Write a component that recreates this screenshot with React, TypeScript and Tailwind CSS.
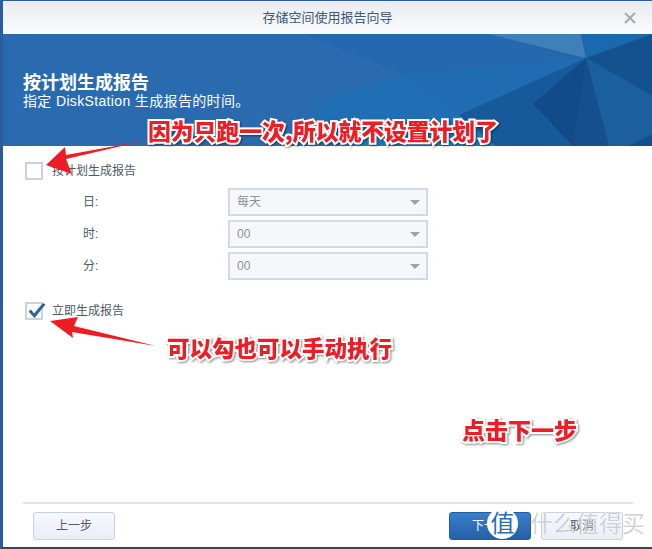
const cjk = "font-['Liberation_Sans','Noto_Sans_CJK_SC',sans-serif]";
const callout =
  "absolute whitespace-nowrap font-['Noto_Sans_CJK_SC',sans-serif] font-black text-[#ee1c25] [-webkit-text-stroke:4px_white] [paint-order:stroke_fill] [filter:drop-shadow(1px_1px_1px_rgba(0,0,0,0.45))]";

function SelectRow({ label, value }: { label: string; value: string }) {
  return (
    <div className="flex h-[28px] items-center">
      <span className="w-[145px] text-[12px] text-[#505a64]">{label}</span>
      <div className="flex h-[28px] w-[200px] items-center justify-between border-2 border-[#d0dbe6] bg-[#f5f7fa] pl-[7px] pr-[3px] text-[12px] text-[#8a929a]">
        <span>{value}</span>
        <svg width="12" height="7" viewBox="0 0 12 7" className="mr-[2px]">
          <path d="M1 1h10L6 6z" fill="#9aa3ad" />
        </svg>
      </div>
    </div>
  );
}

function Banner() {
  return (
    <svg className="h-full w-full" viewBox="0 0 649 112" preserveAspectRatio="none">
      <rect width="649" height="112" fill="#2a6bb0" />
      {/* large soft facets, left to middle */}
      <path d="M300 0H486L583 24 456 81 400 40z" fill="#2568ad" />
      <path d="M400 40L583 24 456 81z" fill="#1f6cb2" />
      <path d="M400 40L456 81 330 112 310 70z" fill="#206fb4" />
      <path d="M456 81L493 112H330z" fill="#1b78bd" />
      {/* facets round the bright point */}
      <path d="M486 0H578L583 24z" fill="#3f80b8" />
      <path d="M578 0H649L583 24z" fill="#1a68ad" />
      <path d="M649 0V62L583 24z" fill="#14528f" />
      <path d="M649 62V100L625 112H606L583 24z" fill="#1c5f9f" />
      <path d="M649 100V112H625z" fill="#164f8c" />
      <path d="M583 24L606 112H493L456 81z" fill="#175a9b" />
      <path d="M583 24L570 112H606z" fill="#154f8e" />
      <path d="M583 24L530 70 570 112z" fill="#124a8a" />
    </svg>
  );
}

export default function App() {
  return (
    <div className={`relative h-[549px] w-[652px] overflow-hidden bg-white ${cjk}`}>
      <div className="flex h-full flex-col border-b-2 border-l-[3px] border-t border-b-[#1d4a80] border-l-[#2b5c9b] border-t-[#2b5c9b]">
        {/* Title bar */}
        <header className="relative flex h-[33px] shrink-0 items-center justify-center bg-gradient-to-b from-[#e8ebef] to-[#fbfbfc] text-[13px] text-[#3f5a78]">
          存储空间使用报告向导
          <svg width="14" height="14" viewBox="0 0 14 14" className="absolute right-[15px] top-[10px]">
            <path d="M2 2l10 10M12 2L2 12" stroke="#a5a9ad" strokeWidth="2" />
          </svg>
        </header>

        {/* Banner */}
        <div className="relative h-[112px] shrink-0">
          <Banner />
          <div className="absolute left-[20px] top-[38px] text-white">
            <div className="text-[18px] font-bold leading-[22px]">按计划生成报告</div>
            <div className="text-[14px] leading-[15px] tracking-[0.35px]">指定 DiskStation 生成报告的时间。</div>
          </div>
        </div>

        {/* Form */}
        <main className="flex flex-1 flex-col pl-[20px] pr-[19px] pt-[16px]">
          <label className="ml-[2px] flex h-[18px] items-center gap-[9px] text-[12px] text-[#505a64]">
            <span className="h-[18px] w-[18px] border-2 border-[#c9d2de] bg-white" />
            按计划生成报告
          </label>
          <div className="mt-[8px] flex flex-col gap-[4px] pl-[60px]">
            <SelectRow label="日:" value="每天" />
            <SelectRow label="时:" value="00" />
            <SelectRow label="分:" value="00" />
          </div>
          <label className="ml-[2px] mt-[22px] flex h-[18px] items-center gap-[9px] text-[12px] text-[#505a64]">
            <span className="relative h-[18px] w-[18px] border-2 border-[#c9d2de] bg-white">
              <svg width="20" height="18" viewBox="0 0 20 18" className="absolute -top-[2px] left-0">
                <path d="M1.5 9.5L4 7.5 7 11.5 16 1 18.5 2.500 7.500 16z" fill="#2d639f" />
              </svg>
            </span>
            立即生成报告
          </label>
          <div className="flex-1" />
          {/* Footer */}
          <footer className="flex h-[45px] items-start justify-between border-t-2 border-[#e3e3e3] pl-[10px] pr-[10px] pt-[8px] text-[12px]">
            <button className="h-[28px] w-[82px] rounded-[3px] border border-[#c5d2e2] bg-gradient-to-b from-[#f6f9fd] to-[#eaeff6] text-[#4f5a66]">
              上一步
            </button>
            <div className="flex gap-[10px]">
              <button className="h-[28px] w-[82px] rounded-[3px] border border-[#1f5fa8] bg-gradient-to-b from-[#3a7fcb] to-[#2460aa] text-white">
                下一步
              </button>
              <button className="h-[28px] w-[82px] rounded-[3px] border border-[#c5d2e2] bg-gradient-to-b from-[#f6f9fd] to-[#eaeff6] text-[#4f5a66]">
                取消
              </button>
            </div>
          </footer>
        </main>
      </div>

      {/* Annotation arrows */}
      <svg className="absolute left-0 top-0" width="652" height="549" viewBox="0 0 652 549">
        <path d="M143 141L66 159 72 174 46 165 65 147 66 155z" fill="#ee1c25" />
        <path d="M156 346L72 332 73 338 50 321 78 317 74 326z" fill="#ee1c25" />
      </svg>

      {/* Annotation text */}
      <div className={`${callout} left-[148px] top-[116px] text-[22.8px] leading-[30px]`}>因为只跑一次,所以就不设置计划了</div>
      <div className={`${callout} left-[167px] top-[332px] text-[22.5px] leading-[30px]`}>可以勾也可以手动执行</div>
      <div className={`${callout} left-[462px] top-[414px] text-[23px] leading-[30px]`}>点击下一步</div>

      {/* Watermark */}
      <div className="absolute left-[487px] top-[508px] flex h-[31px] w-[31px] items-center justify-center rounded-full bg-white text-[24px] leading-none text-[#2a6cb1]">
        值
      </div>
      <div className="absolute left-[530px] top-[510px] whitespace-nowrap text-[23px] leading-[28px] text-[#bfc2c6]/90 [-webkit-text-stroke:0.5px_rgba(255,255,255,0.6)]">
        什么值得买
      </div>
    </div>
  );
}
